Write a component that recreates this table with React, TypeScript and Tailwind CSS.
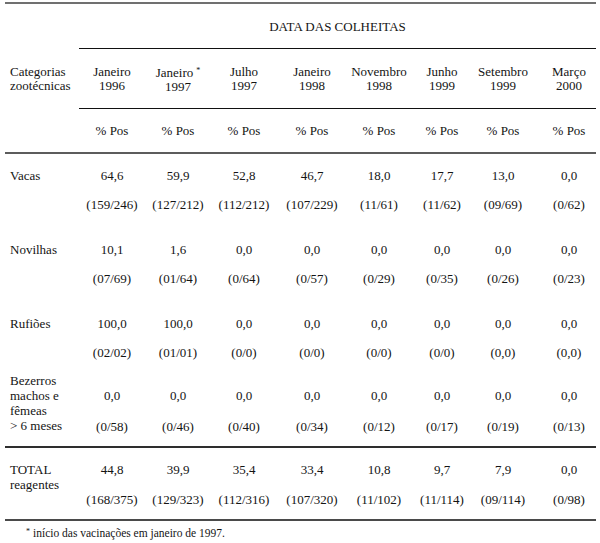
import React from "react";

const cols = "grid grid-cols-[74px_66px_66px_66px_70px_64px_62px_60px_63px]";

const dates: [string, string, boolean?][] = [
  ["Janeiro", "1996"],
  ["Janeiro", "1997", true],
  ["Julho", "1997"],
  ["Janeiro", "1998"],
  ["Novembro", "1998"],
  ["Junho", "1999"],
  ["Setembro", "1999"],
  ["Março", "2000"],
];

type Block = {
  label: string[];
  values: string[];
  counts: string[];
  h: string;
  labelPt: string;
  valPt: string;
  gap: string;
  border?: string;
};

const blocks: Block[] = [
  {
    label: ["Vacas"],
    values: ["64,6", "59,9", "52,8", "46,7", "18,0", "17,7", "13,0", "0,0"],
    counts: ["(159/246)", "(127/212)", "(112/212)", "(107/229)", "(11/61)", "(11/62)", "(09/69)", "(0/62)"],
    h: "h-[74px]",
    labelPt: "pt-[14px]",
    valPt: "pt-[14px]",
    gap: "gap-[14px]",
  },
  {
    label: ["Novilhas"],
    values: ["10,1", "1,6", "0,0", "0,0", "0,0", "0,0", "0,0", "0,0"],
    counts: ["(07/69)", "(01/64)", "(0/64)", "(0/57)", "(0/29)", "(0/35)", "(0/26)", "(0/23)"],
    h: "h-[74px]",
    labelPt: "pt-[14px]",
    valPt: "pt-[14px]",
    gap: "gap-[14px]",
  },
  {
    label: ["Rufiões"],
    values: ["100,0", "100,0", "0,0", "0,0", "0,0", "0,0", "0,0", "0,0"],
    counts: ["(02/02)", "(01/01)", "(0/0)", "(0/0)", "(0/0)", "(0/0)", "(0,0)", "(0,0)"],
    h: "h-[71px]",
    labelPt: "pt-[14px]",
    valPt: "pt-[14px]",
    gap: "gap-[14px]",
  },
  {
    label: ["Bezerros", "machos e", "fêmeas", "> 6 meses"],
    values: ["0,0", "0,0", "0,0", "0,0", "0,0", "0,0", "0,0", "0,0"],
    counts: ["(0/58)", "(0/46)", "(0/40)", "(0/34)", "(0/12)", "(0/17)", "(0/19)", "(0/13)"],
    h: "h-[75px]",
    labelPt: "pt-0",
    valPt: "pt-[15px]",
    gap: "gap-[16px]",
    border: "border-b-2 border-[#2e2e2e]",
  },
];

const total: Block = {
  label: ["TOTAL", "reagentes"],
  values: ["44,8", "39,9", "35,4", "33,4", "10,8", "9,7", "7,9", "0,0"],
  counts: ["(168/375)", "(129/323)", "(112/316)", "(107/320)", "(11/102)", "(11/114)", "(09/114)", "(0/98)"],
  h: "h-[73px]",
  labelPt: "pt-[14px]",
  valPt: "pt-[14px]",
  gap: "gap-[15px]",
  border: "border-b-2 border-[#4a4a4a]",
};

function Row({ b }: { b: Block }) {
  return (
    <div className={`${cols} ${b.h} ${b.border ?? ""}`}>
      <div className={`${b.labelPt} pl-[5px] leading-[15px] whitespace-nowrap`}>
        {b.label.map((l, i) => (
          <div key={i}>{l}</div>
        ))}
      </div>
      {b.values.map((v, i) => (
        <div
          key={i}
          className={`flex flex-col items-center leading-[15px] ${b.valPt} ${b.gap} ${i === 7 ? "pl-[9px]" : ""}`}
        >
          <div>{v}</div>
          <div>{b.counts[i]}</div>
        </div>
      ))}
    </div>
  );
}

export default function App() {
  return (
    <div className="w-[600px] h-[543px] bg-white text-[#141414] text-[13px] [font-family:'Liberation_Serif',serif] overflow-hidden">
      <div className="ml-[5px] w-[591px] mt-[2px] border-t-2 border-[#707070]">
        <div className={`${cols} h-[45px]`}>
          <div />
          <div className="col-span-8 flex items-center justify-center border-b border-[#111] pt-[1px]">
            DATA DAS COLHEITAS
          </div>
        </div>
        <div className={`${cols} h-[60px]`}>
          <div className="flex flex-col justify-center pl-[5px] leading-[14px] whitespace-nowrap">
            <div>Categorias</div>
            <div>zootécnicas</div>
          </div>
          {dates.map(([m, y, star], i) => (
            <div
              key={i}
              className={`flex flex-col items-center justify-center leading-[14px] border-b border-[#111] ${i === 7 ? "pl-[9px]" : ""}`}
            >
              <div>
                {m}
                {star && <span className="text-[8px] align-[4px] ml-[3px]">*</span>}
              </div>
              <div>{y}</div>
            </div>
          ))}
        </div>
        <div className={`${cols} h-[45px] border-b-2 border-[#5c5c5c]`}>
          <div />
          {dates.map((_, i) => (
            <div key={i} className={`flex items-center justify-center ${i === 7 ? "pl-[9px]" : ""}`}>
              % Pos
            </div>
          ))}
        </div>
        {blocks.map((b, i) => (
          <Row key={i} b={b} />
        ))}
        <Row b={total} />
      </div>
      <div className="mt-[4px] pl-[26px] text-[11.5px] leading-[14px]">
        <span className="text-[8px] align-[3px] mr-[3px]">*</span>
        início das vacinações em janeiro de 1997.
      </div>
    </div>
  );
}
